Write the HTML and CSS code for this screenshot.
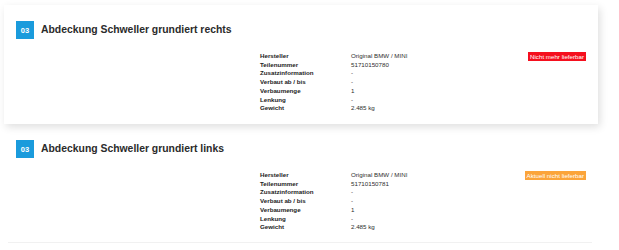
FILE: index.html
```html
<!DOCTYPE html>
<html lang="de">
<head>
<meta charset="utf-8">
<title>Teile</title>
<link rel="stylesheet" href="styles.css">
</head>
<body>
<div class="list">
  <div class="card card-active">
    <div class="card-head">
      <span class="num">03</span>
      <h2 class="title">Abdeckung Schweller grundiert rechts</h2>
    </div>
    <div class="card-body">
      <dl class="specs">
        <dt>Hersteller</dt><dd>Original BMW / MINI</dd>
        <dt>Teilenummer</dt><dd>51710150780</dd>
        <dt>Zusatzinformation</dt><dd>-</dd>
        <dt>Verbaut ab / bis</dt><dd>-</dd>
        <dt>Verbaumenge</dt><dd>1</dd>
        <dt>Lenkung</dt><dd>-</dd>
        <dt>Gewicht</dt><dd>2.485 kg</dd>
      </dl>
      <span class="status status-red">Nicht mehr lieferbar</span>
    </div>
  </div>
  <div class="card card-plain">
    <div class="card-head">
      <span class="num">03</span>
      <h2 class="title">Abdeckung Schweller grundiert links</h2>
    </div>
    <div class="card-body">
      <dl class="specs">
        <dt>Hersteller</dt><dd>Original BMW / MINI</dd>
        <dt>Teilenummer</dt><dd>51710150781</dd>
        <dt>Zusatzinformation</dt><dd>-</dd>
        <dt>Verbaut ab / bis</dt><dd>-</dd>
        <dt>Verbaumenge</dt><dd>1</dd>
        <dt>Lenkung</dt><dd>-</dd>
        <dt>Gewicht</dt><dd>2.485 kg</dd>
      </dl>
      <span class="status status-orange">Aktuell nicht lieferbar</span>
    </div>
  </div>
</div>
</body>
</html>
```

FILE: styles.css
```css
html, body {
  margin: 0;
  padding: 0;
  background: #fff;
}
body {
  font-family: "Liberation Sans", Arial, Helvetica, sans-serif;
  color: #333;
}
.list {
  width: 594px;
  padding: 5px 0 0 4px;
}
.card {
  background: #fff;
  padding: 16px 12px 11px;
  height: 92px;
  position: relative;
}
.card-active {
  box-shadow: 2px 3px 8px rgba(0, 0, 0, 0.13);
  z-index: 1;
}
.card-plain::after {
  content: "";
  position: absolute;
  left: 4px;
  right: 6px;
  bottom: 0;
  height: 1px;
  background: #f1f1f1;
}
.card-head {
  display: flex;
  align-items: center;
  gap: 7px;
  height: 18px;
}
.num {
  width: 18px;
  height: 18px;
  background: #1a9bdc;
  color: #fff;
  font-size: 7.5px;
  font-weight: bold;
  display: flex;
  align-items: center;
  justify-content: center;
}
.title {
  margin: 0;
  font-size: 10.4px;
  font-weight: bold;
  color: #2b2b2b;
  line-height: 12px;
}
.card-body {
  display: flex;
  align-items: flex-start;
  margin-top: 13px;
  padding-left: 244px;
}
.specs {
  margin: 0;
  display: grid;
  grid-template-columns: 91px auto;
  font-size: 6.2px;
  line-height: 8.7px;
}
.specs dt {
  font-weight: bold;
  color: #222;
}
.specs dd {
  margin: 0;
  color: #2e2e2e;
}
.status {
  margin-left: auto;
  color: #fff;
  font-size: 6.2px;
  line-height: 9px;
  height: 9px;
  padding: 0 2px;
}
.status-red {
  background: #f50f1e;
}
.status-orange {
  background: #fba43a;
}
```
